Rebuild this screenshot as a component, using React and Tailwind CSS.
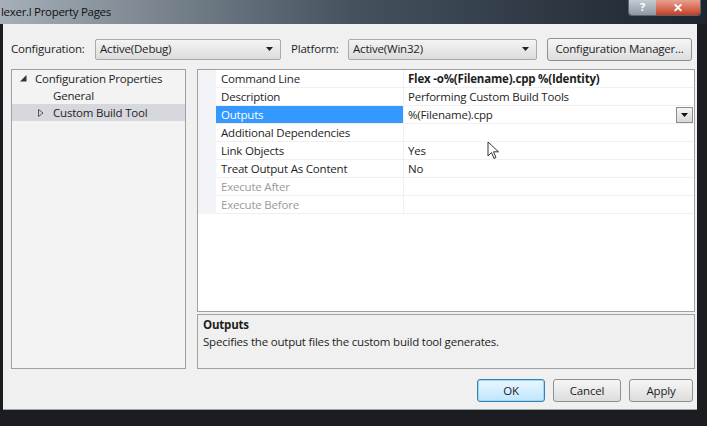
import React from "react";

const rows = [
  { name: "Command Line", value: "Flex -o%(Filename).cpp %(Identity)", bold: true },
  { name: "Description", value: "Performing Custom Build Tools" },
  { name: "Outputs", value: "%(Filename).cpp", selected: true },
  { name: "Additional Dependencies", value: "" },
  { name: "Link Objects", value: "Yes" },
  { name: "Treat Output As Content", value: "No" },
  { name: "Execute After", value: "", disabled: true },
  { name: "Execute Before", value: "", disabled: true },
];

const Combo = ({ text, className }) => (
  <div className={`h-[21px] flex items-center justify-between border border-[#a9a9a9] rounded-[2px] bg-gradient-to-b from-[#f4f4f4] to-[#dcdcdc] pl-[4px] pr-[7px] ${className}`}>
    <span>{text}</span>
    <svg width="7" height="4" viewBox="0 0 7 4"><path d="M0 0h7L3.5 4z" fill="#222" /></svg>
  </div>
);

const Btn = ({ children, className }) => (
  <div className={`h-[23px] flex items-center justify-center rounded-[3px] border ${className}`}>{children}</div>
);

export default function App() {
  return (
    <div className="w-[707px] h-[426px] bg-[#1b1d20] overflow-hidden text-[11.5px] text-[#1e1e1e]" style={{ fontFamily: '"Open Sans", "Noto Sans", sans-serif' }}>
      {/* title bar */}
      <div className="h-[24px] flex items-start justify-between bg-gradient-to-r from-[#a7b0b8] via-[#45525e] to-[#1c2530]">
        <div className="pt-[3px] pl-[1px] text-[11.5px] text-[#111] tracking-[-0.3px]">lexer.l Property Pages</div>
        <div className="flex mr-[6px] h-[16px] rounded-b-[4px] overflow-hidden border border-t-0 border-[#5a6570]">
          <div className="w-[27px] flex items-center justify-center bg-gradient-to-b from-[#c4ccd4] to-[#8c98a3] text-white text-[11px] font-bold">?</div>
          <div className="w-[44px] flex items-center justify-center bg-gradient-to-b from-[#e8a090] to-[#c43b22] text-white text-[12px] font-bold">✕</div>
        </div>
      </div>
      {/* window body */}
      <div className="h-[386px] mx-[3px] mr-[10px] bg-[#f0f0f0] border-b border-[#9aa2aa] flex flex-col tracking-[-0.2px]">
        <div className="flex items-center h-[22px] mt-[14px] pl-[8px]">
          <span className="w-[84px]">Configuration:</span>
          <Combo text="Active(Debug)" className="w-[186px]" />
          <span className="ml-[10px] w-[57px]">Platform:</span>
          <Combo text="Active(Win32)" className="w-[189px]" />
          <Btn className="ml-[10px] w-[145px] border-[#8e8f8f] bg-gradient-to-b from-[#f6f6f6] to-[#dddddd]">Configuration Manager...</Btn>
        </div>
        <div className="flex mt-[9px] pl-[8px] gap-[11px]">
          {/* tree */}
          <div className="w-[175px] h-[300px] border border-[#a0a0a0] bg-[#f3f3f3]">
            <div className="h-[17px] flex items-center pl-[8px]">
              <svg width="7" height="7" viewBox="0 0 7 7"><path d="M0 6.5L6.5 6.5L6.5 0z" fill="#333" /></svg>
              <span className="ml-[8px]">Configuration Properties</span>
            </div>
            <div className="h-[17px] flex items-center pl-[41px]">General</div>
            <div className="h-[17px] flex items-center pl-[26px] bg-[#d6d8de]">
              <svg width="6" height="8" viewBox="0 0 6 8"><path d="M0.5 0.5L5 4L0.5 7.5z" fill="none" stroke="#555" /></svg>
              <span className="ml-[9px]">Custom Build Tool</span>
            </div>
          </div>
          <div className="flex flex-col w-[498px]">
            {/* grid */}
            <div className="h-[243px] border border-[#a0a0a0] bg-white flex">
              <div className="w-[18px] bg-[#f3f4f7] h-[144px]" />
              <div className="flex-1 flex flex-col">
                {rows.map((r) => (
                  <div key={r.name} className="h-[18px] flex border-b border-[#f0f0f0]">
                    <div className={`w-[187px] pl-[5px] flex items-center ${r.selected ? "bg-[#3399ff] text-white" : ""} ${r.disabled ? "text-[#9a9a9a]" : ""}`}>{r.name}</div>
                    <div className={`flex-1 pl-[4px] flex items-center justify-between border-l border-[#f0f0f0] ${r.bold ? "font-bold" : ""}`}>
                      <span>{r.value}</span>
                      {r.selected && (
                        <div className="w-[17px] h-[16px] border border-[#8c8c8c] bg-gradient-to-b from-[#f4f4f4] to-[#d8d8d8] flex items-center justify-center mr-[1px]">
                          <svg width="7" height="4" viewBox="0 0 7 4"><path d="M0 0h7L3.5 4z" fill="#111" /></svg>
                        </div>
                      )}
                    </div>
                  </div>
                ))}
                <div className="relative">
                  <svg className="absolute left-[271px] -top-[73px]" width="14" height="20" viewBox="0 0 14 20">
                    <path d="M1 1L1 15L4.5 11.5L7 17.5L9 16.5L6.5 10.8L11.5 10.8z" fill="#fff" stroke="#333" strokeWidth="1" />
                  </svg>
                </div>
              </div>
            </div>
            {/* description */}
            <div className="h-[55px] mt-[2px] border border-[#a0a0a0] bg-[#f0f0f0] pl-[5px] pt-[2px]">
              <div className="font-bold leading-[16px]">Outputs</div>
              <div className="leading-[17px]">Specifies the output files the custom build tool generates.</div>
            </div>
          </div>
        </div>
        <div className="flex justify-end gap-[8px] mt-[10px] pr-[4px]">
          <Btn className="w-[68px] border-[#3c7fb1] bg-gradient-to-b from-[#eaf6fd] to-[#bee6fd] shadow-[inset_0_0_0_1px_#9ad8f5]">OK</Btn>
          <Btn className="w-[68px] border-[#8e8f8f] bg-gradient-to-b from-[#f6f6f6] to-[#dddddd]">Cancel</Btn>
          <Btn className="w-[64px] border-[#8e8f8f] bg-gradient-to-b from-[#f6f6f6] to-[#dddddd]">Apply</Btn>
        </div>
      </div>
    </div>
  );
}
